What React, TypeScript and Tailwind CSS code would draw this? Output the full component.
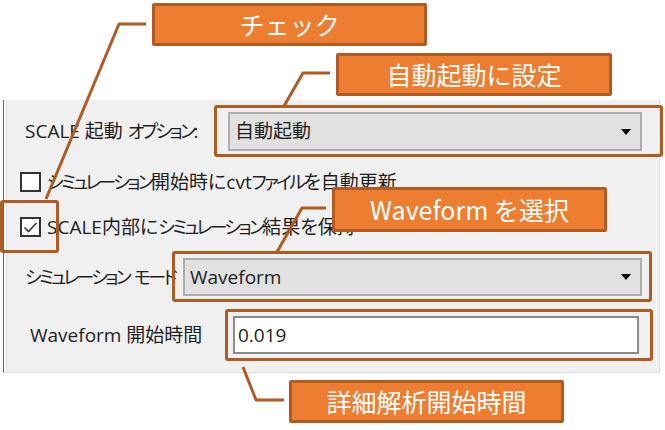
import type { ReactNode } from "react";

const edge = "#b05b22";

function Kana({ children }: { children: ReactNode }) {
  return <span className="text-[18px] tracking-[-0.15em]">{children}</span>;
}

function Combo({ value, width }: { value: string; width: string }) {
  return (
    <div
      className={`flex h-full items-center justify-between border-2 border-[#adadad] bg-[#e1e1e1] pl-[5px] pr-[9px] ${width}`}
    >
      <span>{value}</span>
      <svg width="10" height="6" viewBox="0 0 10 6" aria-hidden="true">
        <path d="M0 0h10L5 6z" fill="#000" />
      </svg>
    </div>
  );
}

function Check({ checked, children }: { checked?: boolean; children: ReactNode }) {
  return (
    <div className="flex h-[20px] items-center pl-[13px]">
      <span className="grid h-[20px] w-[21px] shrink-0 place-items-center border-2 border-[#333] bg-white">
        {checked && (
          <svg width="15" height="13" viewBox="0 0 15 13" aria-hidden="true">
            <path d="M1.5 6.5 5.5 10.5 13.5 2" fill="none" stroke="#3a3a3a" strokeWidth="1.6" />
          </svg>
        )}
      </span>
      <span className="ml-[6px] whitespace-nowrap">{children}</span>
    </div>
  );
}

function Callout({ pos, children }: { pos: string; children: ReactNode }) {
  return (
    <div
      className={`absolute flex items-center justify-center rounded-[2px] border-[3px] border-[#b05b22] bg-[#ed7d31] font-['Noto_Sans_CJK_JP',sans-serif] text-[25px] text-white [font-feature-settings:normal] ${pos}`}
    >
      {children}
    </div>
  );
}

function Mark({ pos }: { pos: string }) {
  return <div className={`absolute rounded-[3px] border-[3px] border-[#b05b22] ${pos}`} />;
}

export default function App() {
  return (
    <div className="relative h-[430px] w-[665px] overflow-hidden bg-white pt-[100px] font-['Open_Sans','Noto_Sans_CJK_JP',sans-serif] text-[19px] leading-none text-[#1e1e1e] [font-feature-settings:'palt']">
      <div className="ml-[3px] flex h-[273px] w-[657px] border-b border-l border-r border-b-[#dcdcdc] border-l-[#1a73d9] border-r-[#dcdcdc] bg-white">
        <div className="ml-[2px] flex flex-1 flex-col border-l border-[#dedede] bg-[#f0f0f0]">
          <div className="mt-[12px] flex h-[39px] items-center pl-[18px]">
            <span className="w-[203px] whitespace-nowrap">
              SCALE 起動 <Kana>オプション</Kana>:
            </span>
            <Combo value="自動起動" width="w-[414px]" />
          </div>

          <div className="mt-[21px]">
            <Check>
              <Kana>シミュレーション</Kana>開始時にcvt<Kana>ファイル</Kana>を自動更新
            </Check>
          </div>
          <div className="mt-[25px]">
            <Check checked>
              SCALE内部に<Kana>シミュレーション</Kana>結果を保持
            </Check>
          </div>

          <div className="mt-[21px] flex h-[38px] items-center pl-[18px]">
            <span className="w-[158px] whitespace-nowrap">
              <Kana>シミュレーション</Kana> <Kana>モード</Kana>
            </span>
            <Combo value="Waveform" width="w-[459px]" />
          </div>

          <div className="mt-[20px] flex h-[38px] items-center pl-[23px]">
            <span className="w-[203px] whitespace-nowrap">Waveform 開始時間</span>
            <div className="flex h-full w-[406px] items-center border-2 border-[#8a8a8a] bg-white pl-[3px]">
              0.019
            </div>
          </div>
        </div>
      </div>

      <svg className="pointer-events-none absolute left-0 top-0" width="665" height="430" aria-hidden="true">
        <g fill="none" stroke={edge} strokeWidth="3" strokeLinejoin="round">
          <polyline points="146,24 119,24 46,199" />
          <polyline points="330,73 303,73 284,106" />
          <polyline points="326,208 302,208 277,252" />
          <polyline points="243,367 256,400 284,400" />
        </g>
      </svg>

      <Mark pos="left-[214px] top-[105px] h-[52px] w-[449px]" />
      <Mark pos="left-0 top-[200px] h-[53px] w-[59px]" />
      <Mark pos="left-[172px] top-[251px] h-[51px] w-[480px]" />
      <Mark pos="left-[225px] top-[309px] h-[52px] w-[428px]" />

      <Callout pos="left-[152px] top-[3px] h-[43px] w-[275px]">チェック</Callout>
      <Callout pos="left-[336px] top-[53px] h-[43px] w-[276px]">自動起動に設定</Callout>
      <Callout pos="left-[332px] top-[187px] h-[45px] w-[275px]">Waveform を選択</Callout>
      <Callout pos="left-[289px] top-[380px] h-[43px] w-[275px]">詳細解析開始時間</Callout>
    </div>
  );
}
